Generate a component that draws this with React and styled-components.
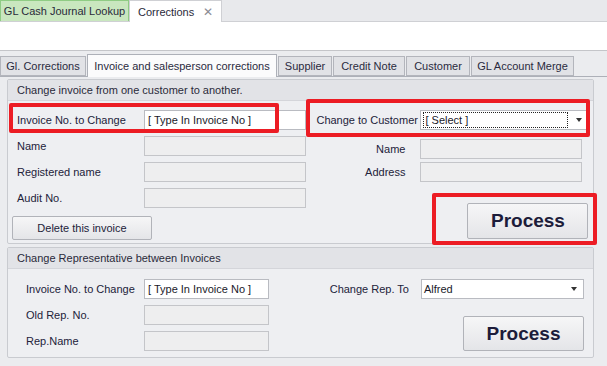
import React from "react";
import styled, { createGlobalStyle } from "styled-components";

const Global = createGlobalStyle`
  html, body { margin: 0; padding: 0; background: #ebecef; }
  body { font-family: "Liberation Sans", Arial, sans-serif; font-size: 11px; color: #1e1e2a; }
  * { box-sizing: border-box; }
`;

const Page = styled.div`
  width: 607px;
  height: 366px;
  overflow: hidden;
  background: #ebecef;
`;

const DocBar = styled.div`
  display: flex;
  align-items: flex-end;
  height: 22px;
  background: #e8e9ec;
  border-bottom: 1px solid #cfd0d4;
`;

const DocTab = styled.div`
  display: flex;
  align-items: center;
  justify-content: ${p => (p.$active ? "space-between" : "center")};
  width: ${p => p.$w}px;
  height: ${p => (p.$active ? 22 : 21)}px;
  padding: 0 8px 0 8px;
  background: ${p => (p.$active ? "#ffffff" : "#c9e7bf")};
  border: 1px solid ${p => (p.$active ? "#cfd0d4" : "#8fcc84")};
  border-bottom: none;
  font-size: 11px;
  white-space: nowrap;
  color: #2a2a3a;
  margin-bottom: ${p => (p.$active ? -1 : 0)}px;
`;

const CloseX = styled.span`
  font-weight: bold;
  color: #8a8c92;
  font-size: 12px;
  font-family: "DejaVu Sans", sans-serif;
`;

const WhiteStrip = styled.div`
  height: 29px;
  background: #ffffff;
  border-bottom: 1px solid #c4c5c9;
`;

const SubTabs = styled.div`
  display: flex;
  align-items: flex-end;
  height: 25px;
  padding-top: 2px;
  position: relative;
  z-index: 1;
`;

const SubTab = styled.div`
  display: flex;
  align-items: center;
  justify-content: center;
  width: ${p => p.$w}px;
  height: ${p => (p.$active ? 23 : 20)}px;
  margin-right: 1px;
  background: ${p => (p.$active ? "#fbfbfc" : "#e1e2e6")};
  border: 1px solid ${p => (p.$active ? "#adb0b8" : "#b3b5bc")};
  border-bottom: ${p => (p.$active ? "none" : "1px solid #b3b5bc")};
  color: #2a2a3e;
  font-size: 11px;
  white-space: nowrap;
  margin-bottom: ${p => (p.$active ? -1 : 0)}px;
`;

const TabBody = styled.div`
  border-top: 1px solid #adb0b8;
  padding: 2px 13px 0 7px;
  display: flex;
  flex-direction: column;
  gap: 3px;
`;

const Panel = styled.section`
  position: relative;
  background: #eeeff2;
  border: 1px solid #c9cbd0;
  border-radius: 2px;
`;

const PanelHeader = styled.div`
  height: 21px;
  display: flex;
  align-items: center;
  padding-left: 9px;
  background: #e2e3e7;
  border-bottom: 1px solid #d4d5da;
  font-size: 11px;
  color: #2a2a3a;
`;

const PanelBody = styled.div`
  display: flex;
  padding: ${p => p.$pad};
`;

const Column = styled.div`
  display: flex;
  flex-direction: column;
  width: ${p => p.$w}px;
  gap: ${p => p.$gap}px;
`;

const Row = styled.div`
  display: flex;
  align-items: center;
  height: ${p => p.$h || 20}px;
  margin-top: ${p => p.$mt || 0}px;
`;

const Label = styled.div`
  width: ${p => p.$w}px;
  flex-shrink: 0;
  text-align: ${p => p.$align || "left"};
  padding-left: ${p => p.$pl || 0}px;
  padding-right: ${p => p.$pr || 0}px;
  font-size: 11px;
  color: #22223a;
  white-space: nowrap;
`;

const Field = styled.div`
  width: ${p => p.$w}px;
  height: ${p => p.$h || 20}px;
  background: ${p => (p.$disabled ? "#eeeeef" : "#ffffff")};
  border: 1px solid ${p => (p.$disabled ? "#c4c5c9" : "#b9bbc1")};
  display: flex;
  align-items: center;
  padding-left: 3px;
  font-size: 11px;
  color: #1a1a2a;
  white-space: nowrap;
`;

const Combo = styled(Field)`
  justify-content: space-between;
  padding: 0 6px 0 2px;
`;

const FocusText = styled.span`
  flex: 1;
  height: 16px;
  display: flex;
  align-items: center;
  padding-left: 2px;
  margin-right: 8px;
  outline: 1px dotted #222;
  outline-offset: -1px;
`;

const Arrow = styled.span`
  width: 0;
  height: 0;
  border-left: 3.5px solid transparent;
  border-right: 3.5px solid transparent;
  border-top: 4px solid #333;
`;

const Button = styled.button`
  width: ${p => p.$w}px;
  height: ${p => p.$h}px;
  margin-left: ${p => p.$ml || 0}px;
  background: linear-gradient(#f6f6f7, #e4e5e8);
  border: 1px solid #b1b3b9;
  border-radius: 2px;
  font-family: "Liberation Sans", Arial, sans-serif;
  font-size: ${p => (p.$big ? 19 : 11)}px;
  font-weight: ${p => (p.$big ? 700 : 400)};
  color: ${p => (p.$big ? "#1c1c3a" : "#22223a")};
  padding: 0;
  display: flex;
  align-items: center;
  justify-content: center;
`;

const Highlight = styled.div`
  position: absolute;
  left: ${p => p.$x}px;
  top: ${p => p.$y}px;
  width: ${p => p.$w}px;
  height: ${p => p.$h}px;
  border: 4px solid #ec1c24;
  border-radius: 2px;
  pointer-events: none;
`;

export default function App() {
  return (
    <Page>
      <Global />
      <DocBar>
        <DocTab $w={129}>GL Cash Journal Lookup</DocTab>
        <DocTab $w={93} $active>
          Corrections <CloseX>✕</CloseX>
        </DocTab>
      </DocBar>
      <WhiteStrip />
      <SubTabs>
        <SubTab $w={86}>Gl. Corrections</SubTab>
        <SubTab $w={190} $active>Invoice and salesperson corrections</SubTab>
        <SubTab $w={54}>Supplier</SubTab>
        <SubTab $w={72}>Credit Note</SubTab>
        <SubTab $w={64}>Customer</SubTab>
        <SubTab $w={103}>GL Account Merge</SubTab>
      </SubTabs>
      <TabBody>
        <Panel>
          <PanelHeader>Change invoice from one customer to another.</PanelHeader>
          <PanelBody $pad="9px 0 3px 3px">
            <Column $w={305} $gap={6}>
              <Row>
                <Label $w={133} $pl={6}>Invoice No. to Change</Label>
                <Field $w={162}>[ Type In Invoice No ]</Field>
              </Row>
              <Row>
                <Label $w={133} $pl={6}>Name</Label>
                <Field $w={162} $disabled />
              </Row>
              <Row>
                <Label $w={133} $pl={6}>Registered name</Label>
                <Field $w={162} $disabled />
              </Row>
              <Row>
                <Label $w={133} $pl={6}>Audit No.</Label>
                <Field $w={162} $disabled />
              </Row>
              <Row $h={24} $mt={2}>
                <Button $w={140} $h={24} $ml={1}>Delete this invoice</Button>
              </Row>
            </Column>
            <Column $w={280} $gap={0}>
              <Row>
                <Label $w={106} $pl={2}>Change to Customer</Label>
                <Combo $w={169}>
                  <FocusText>[ Select ]</FocusText>
                  <Arrow />
                </Combo>
              </Row>
              <Row $mt={9}>
                <Label $w={106} $align="right" $pr={15}>Name</Label>
                <Field $w={162} $disabled />
              </Row>
              <Row $mt={3}>
                <Label $w={106} $align="right" $pr={15}>Address</Label>
                <Field $w={162} $disabled />
              </Row>
              <Row $h={36} $mt={21}>
                <Button $w={121} $h={36} $ml={153} $big>Process</Button>
              </Row>
            </Column>
          </PanelBody>
          <Highlight $x={1} $y={23} $w={270} $h={30} />
          <Highlight $x={298} $y={19} $w={284} $h={38} />
          <Highlight $x={424} $y={113} $w={165} $h={52} />
        </Panel>
        <Panel>
          <PanelHeader>Change Representative between Invoices</PanelHeader>
          <PanelBody $pad="10px 0 6px 0">
            <Column $w={305} $gap={6}>
              <Row>
                <Label $w={136} $pl={18}>Invoice No. to Change</Label>
                <Field $w={125}>[ Type In Invoice No ]</Field>
              </Row>
              <Row>
                <Label $w={136} $pl={18}>Old Rep. No.</Label>
                <Field $w={125} $disabled />
              </Row>
              <Row>
                <Label $w={136} $pl={18}>Rep.Name</Label>
                <Field $w={125} $disabled />
              </Row>
            </Column>
            <Column $w={280} $gap={0}>
              <Row>
                <Label $w={108} $align="right" $pr={12}>Change Rep. To</Label>
                <Combo $w={163}>
                  <span>Alfred</span>
                  <Arrow />
                </Combo>
              </Row>
              <Row $h={35} $mt={17}>
                <Button $w={121} $h={35} $ml={150} $big>Process</Button>
              </Row>
            </Column>
          </PanelBody>
        </Panel>
      </TabBody>
    </Page>
  );
}
